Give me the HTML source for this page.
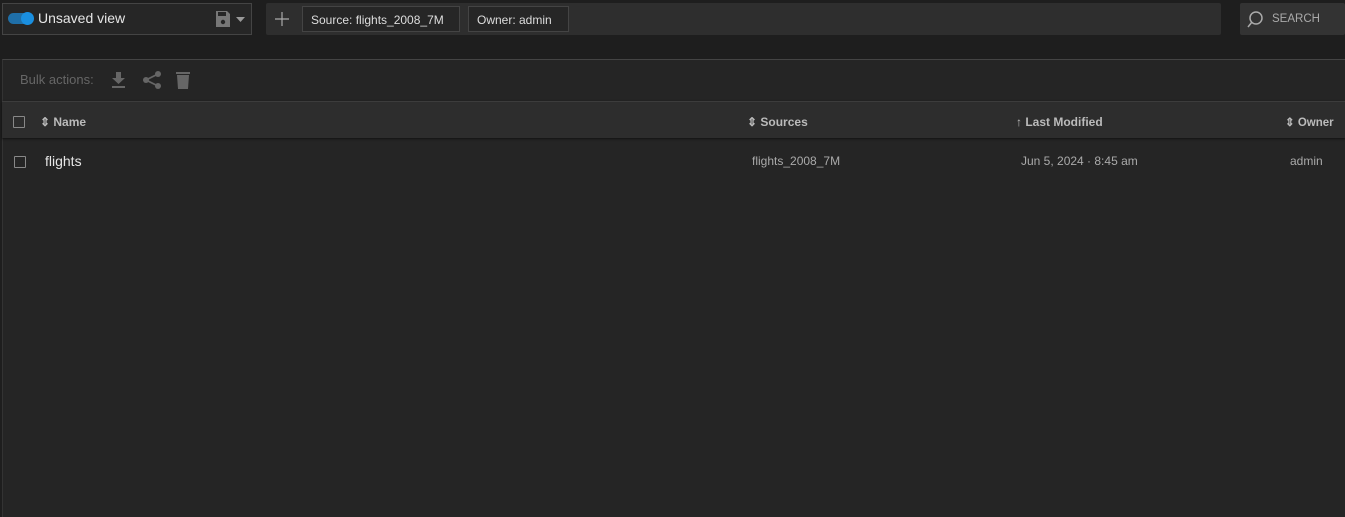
<!DOCTYPE html><html><head><style>
*{box-sizing:border-box;margin:0;padding:0}
body{width:1345px;height:517px;background:#1e1e1e;font-family:"Liberation Sans",sans-serif;position:relative;overflow:hidden;color:#ddd}
.abs{position:absolute}
</style></head><body>
<div class="abs" style="left:2px;top:3px;width:250px;height:32px;border:1px solid #444;background:#262626"></div>
<div class="abs" style="left:8px;top:13px;width:25px;height:11px;border-radius:6px;background:#1f6fa8"></div>
<div class="abs" style="left:21px;top:12px;width:13px;height:13px;border-radius:50%;background:#1a8fe0"></div>
<div class="abs" style="left:38px;top:10px;font-size:14px;color:#e6e6e6">Unsaved view</div>
<svg class="abs" style="left:215px;top:10px" width="36" height="18"><path d="M1 1h11l3 3v13H1z" fill="#777"/><rect x="3" y="2" width="8" height="4" fill="#262626"/><circle cx="8" cy="12" r="2.2" fill="#262626"/><path d="M21 7h9l-4.5 5z" fill="#999"/></svg>
<div class="abs" style="left:266px;top:3px;width:955px;height:32px;background:#2e2e2e;border-radius:2px"></div>
<svg class="abs" style="left:275px;top:12px" width="14" height="14"><path d="M7 0v14M0 7h14" stroke="#aaa" stroke-width="1.2"/></svg>
<div class="abs" style="left:302px;top:6px;width:158px;height:26px;border:1px solid #444;background:#262626;font-size:12px;color:#ddd;padding:6px 8px">Source: flights_2008_7M</div>
<div class="abs" style="left:468px;top:6px;width:101px;height:26px;border:1px solid #444;background:#262626;font-size:12px;color:#ddd;padding:6px 8px">Owner: admin</div>
<div class="abs" style="left:1240px;top:3px;width:105px;height:32px;background:#333;border-radius:2px"></div>
<svg class="abs" style="left:1246px;top:10px" width="18" height="18"><circle cx="10" cy="8" r="6" fill="none" stroke="#aaa" stroke-width="1.5"/><path d="M6 12l-4 5" stroke="#aaa" stroke-width="1.5"/></svg>
<div class="abs" style="left:1272px;top:13px;font-size:11.5px;color:#aaa">SEARCH</div>
<div class="abs" style="left:2px;top:59px;width:1343px;height:458px;background:#252525;border-top:1px solid #444;border-left:1px solid #333"></div>
<div class="abs" style="left:20px;top:72px;font-size:13px;color:#666">Bulk actions:</div>
<svg class="abs" style="left:110px;top:70px" width="85" height="20"><path d="M6 2h5v6h4l-6.5 6L2 8h4z" fill="#666"/><rect x="2" y="16" width="13" height="2" fill="#666"/><circle cx="48" cy="4" r="3" fill="#666"/><circle cx="36" cy="10" r="3" fill="#666"/><circle cx="48" cy="16" r="3" fill="#666"/><path d="M48 4L36 10L48 16" stroke="#666" stroke-width="1.8" fill="none"/><rect x="66" y="2" width="14" height="2" fill="#666"/><path d="M67 5h12l-1 14h-10z" fill="#666"/></svg>
<div class="abs" style="left:2px;top:101px;width:1343px;height:37px;background:#2d2d2d;border-top:1px solid #3c3c3c;box-shadow:0 1px 2px #111"></div>
<div class="abs" style="left:13px;top:116px;width:12px;height:12px;border:1.5px solid #888;border-radius:1px"></div>
<div class="abs" style="left:40px;top:115px;font-size:12px;font-weight:bold;color:#bbb">⇕ Name</div>
<div class="abs" style="left:747px;top:115px;font-size:12px;font-weight:bold;color:#bbb">⇕ Sources</div>
<div class="abs" style="left:1016px;top:115px;font-size:12px;font-weight:bold;color:#bbb">↑ Last Modified</div>
<div class="abs" style="left:1285px;top:115px;font-size:11.5px;font-weight:bold;color:#bbb">⇕ Owner</div>
<div class="abs" style="left:14px;top:156px;width:12px;height:12px;border:1.5px solid #888;border-radius:1px"></div>
<div class="abs" style="left:45px;top:153px;font-size:14px;color:#e6e6e6">flights</div>
<div class="abs" style="left:752px;top:154px;font-size:12px;color:#aaa">flights_2008_7M</div>
<div class="abs" style="left:1021px;top:154px;font-size:12px;color:#aaa">Jun 5, 2024 · 8:45 am</div>
<div class="abs" style="left:1290px;top:154px;font-size:12px;color:#aaa">admin</div>
</body></html>
